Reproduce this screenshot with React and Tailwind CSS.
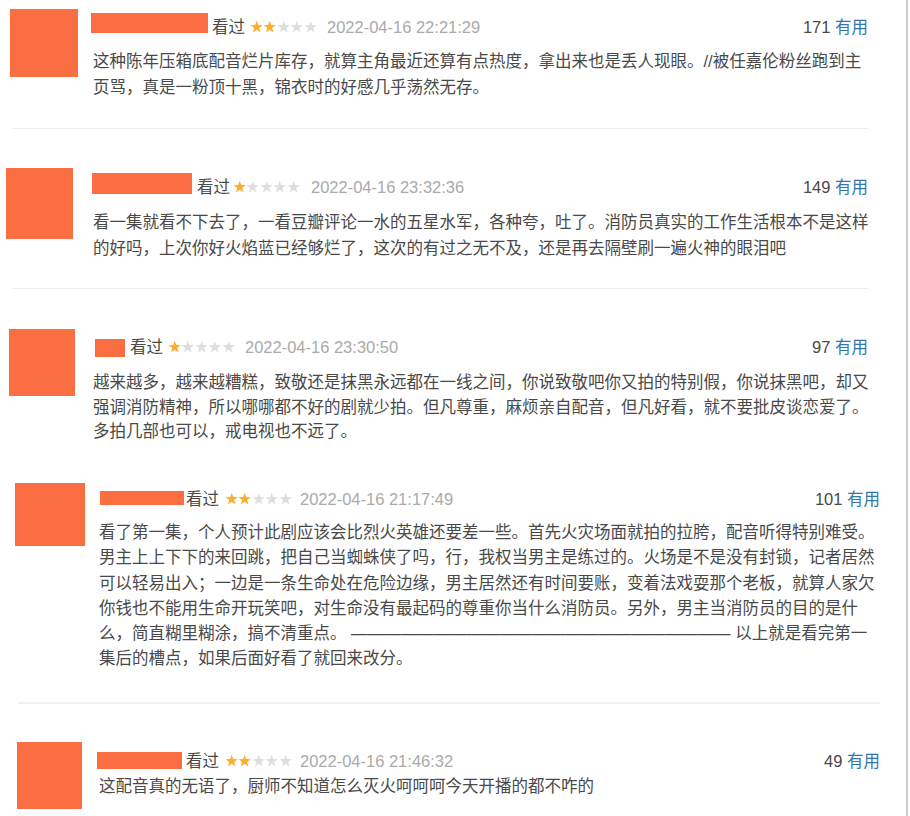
import React from 'react';

const comments = [
  {
    id: 1,
    stars: 2,
    date: '2022-04-16 22:21:29',
    votes: 171,
    text: '这种陈年压箱底配音烂片库存，就算主角最近还算有点热度，拿出来也是丢人现眼。//被任嘉伦粉丝跑到主页骂，真是一粉顶十黑，锦衣时的好感几乎荡然无存。',
    section: 'h-[150px] pt-[9px] pl-[10px]',
    avatar: 'w-[68px] h-[68px]',
    body: 'ml-[13px] w-[777px]',
    head: 'mt-[7px]',
    name: 'self-start -mt-[3px] w-[117px] h-[20px]',
    seen: 'ml-[4px]',
    rating: 'ml-[5px]',
    when: 'ml-[10px]',
    para: 'mt-[10px] pl-[2px] w-[782px] leading-[26px]',
    rule: 'mt-[28px] ml-[3px] w-[855px]',
  },
  {
    id: 2,
    stars: 1,
    date: '2022-04-16 23:32:36',
    votes: 149,
    text: '看一集就看不下去了，一看豆瓣评论一水的五星水军，各种夸，吐了。消防员真实的工作生活根本不是这样的好吗，上次你好火焰蓝已经够烂了，这次的有过之无不及，还是再去隔壁刷一遍火神的眼泪吧',
    section: 'h-[160px] pt-[18px] pl-[6px]',
    avatar: 'w-[67px] h-[71px]',
    body: 'ml-[19px] w-[776px]',
    head: 'mt-[8px]',
    name: 'self-start -mt-[3px] w-[100px] h-[21px]',
    seen: 'ml-[5px]',
    rating: 'ml-[3px]',
    when: 'ml-[11px]',
    para: 'mt-[11px] pl-[1px] w-[781px] leading-[26px]',
    rule: 'mt-[27px] ml-[7px] w-[855px]',
  },
  {
    id: 3,
    stars: 1,
    date: '2022-04-16 23:30:50',
    votes: 97,
    text: '越来越多，越来越糟糕，致敬还是抹黑永远都在一线之间，你说致敬吧你又拍的特别假，你说抹黑吧，却又强调消防精神，所以哪哪都不好的剧就少拍。但凡尊重，麻烦亲自配音，但凡好看，就不要批皮谈恋爱了。多拍几部也可以，戒电视也不远了。',
    section: 'h-[150px] pt-[19px] pl-[9px]',
    avatar: 'w-[66px] h-[67px]',
    body: 'ml-[18px] w-[775px]',
    head: 'mt-[7px]',
    name: 'self-start mt-[3px] ml-[2px] w-[30px] h-[18px]',
    seen: 'ml-[5px]',
    rating: 'ml-[5px]',
    when: 'ml-[10px]',
    para: 'mt-[12px] w-[780px] leading-[24.5px]',
    rule: null,
  },
  {
    id: 4,
    stars: 2,
    date: '2022-04-16 21:17:49',
    votes: 101,
    text: '看了第一集，个人预计此剧应该会比烈火英雄还要差一些。首先火灾场面就拍的拉胯，配音听得特别难受。男主上上下下的来回跳，把自己当蜘蛛侠了吗，行，我权当男主是练过的。火场是不是没有封锁，记者居然可以轻易出入；一边是一条生命处在危险边缘，男主居然还有时间要账，变着法戏耍那个老板，就算人家欠你钱也不能用生命开玩笑吧，对生命没有最起码的尊重你当什么消防员。另外，男主当消防员的目的是什么，简直糊里糊涂，搞不清重点。 ——————————————————————— 以上就是看完第一集后的槽点，如果后面好看了就回来改分。',
    section: 'h-[240px] pt-[23px] pl-[15px]',
    avatar: 'w-[70px] h-[63px]',
    body: 'ml-[14px] w-[781px]',
    head: 'mt-[5px]',
    name: 'self-start mt-[3px] ml-[1px] w-[84px] h-[14px]',
    seen: 'ml-[2px]',
    rating: 'ml-[6px]',
    when: 'ml-[8px]',
    para: 'mt-[10px] w-[781px] leading-[25.3px]',
    rule: null,
  },
  {
    id: 5,
    stars: 2,
    date: '2022-04-16 21:46:32',
    votes: 49,
    text: '这配音真的无语了，厨师不知道怎么灭火呵呵呵今天开播的都不咋的',
    section: 'h-[116px] pl-[17px]',
    top: 'mt-[2px] ml-[1px] w-[862px]',
    avatar: 'w-[65px] h-[67px]',
    body: 'ml-[15px] w-[783px]',
    head: 'mt-[8px]',
    name: 'self-start mt-[2px] w-[85px] h-[17px]',
    seen: 'ml-[4px]',
    rating: 'ml-[6px]',
    when: 'ml-[8px]',
    para: 'mt-[1px] pl-[2px] w-[783px] leading-[26px]',
    rule: null,
  },
];

const STAR = '7,0.7 8.6,5.3 13.47,5.4 9.58,8.34 11,13 7,10.22 3,13 4.42,8.34 0.53,5.4 5.4,5.3';

function Stars({ count }) {
  return (
    <span className="flex items-center">
      {[0, 1, 2, 3, 4].map((i) => (
        <svg key={i} viewBox="0 0 14 14" className="w-[13.4px] h-[13.4px]">
          <polygon points={STAR} fill={i < count ? '#ffac2d' : '#dedede'} />
        </svg>
      ))}
    </span>
  );
}

function Comment({ c }) {
  return (
    <section className={`flex flex-col ${c.section}`}>
      {c.top && <div className={`h-[2px] bg-[#f0f0f0] mb-[38px] ${c.top}`} />}
      <div className="flex items-start">
        <div className={`shrink-0 bg-[#fa6e41] ${c.avatar}`} />
        <div className={`shrink-0 ${c.body}`}>
          <div className={`flex items-center h-[22px] leading-[22px] ${c.head}`}>
            <span className={`shrink-0 bg-[#fa6e41] ${c.name}`} />
            <span className={`text-[#494949] ${c.seen}`}>看过</span>
            <span className={c.rating}>
              <Stars count={c.stars} />
            </span>
            <span className={`text-[#aaa] ${c.when}`}>{c.date}</span>
            <span className="ml-auto text-[#494949]">
              {c.votes} <span className="text-[#3377aa]">有用</span>
            </span>
          </div>
          <p className={`text-[#494949] ${c.para}`}>{c.text}</p>
        </div>
      </div>
      {c.rule && <div className={`h-px bg-[#ececec] ${c.rule}`} />}
    </section>
  );
}

export default function App() {
  return (
    <div className="w-[910px] h-[816px] overflow-hidden bg-white">
      <div className="w-[908px] h-[816px] border-r-2 border-[#cdcdcd] text-[16.5px] font-['Liberation_Sans','Noto_Sans_CJK_SC',sans-serif]">
        {comments.map((c) => (
          <Comment key={c.id} c={c} />
        ))}
      </div>
    </div>
  );
}
